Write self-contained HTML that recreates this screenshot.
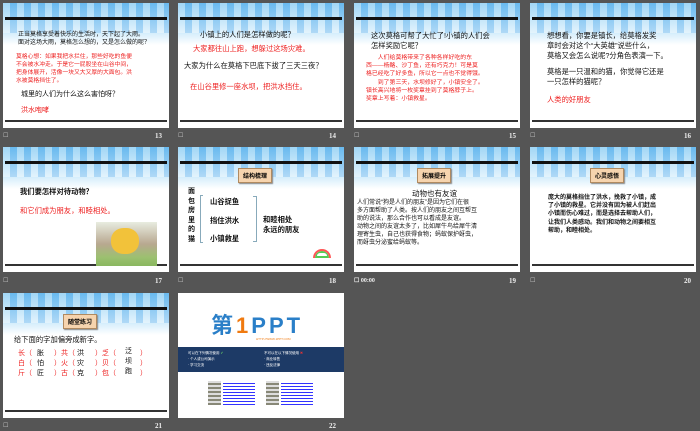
<!DOCTYPE html>
<html><head><meta charset="utf-8"><style>
*{margin:0;padding:0;box-sizing:border-box}
body{width:700px;height:431px;background:#555;position:relative;overflow:hidden;font-family:"Liberation Sans","Noto Sans CJK SC",sans-serif}
.s{position:absolute;width:166px;height:125px;background:#fff;overflow:hidden}
.hd{position:absolute;left:0;top:0;width:100%;height:42px;background:linear-gradient(180deg,#6fc0f0 0%,#9ad4f6 30%,#c4e6fa 60%,#fff 100%)}
.hd:before{content:"";position:absolute;left:0;right:0;top:0;height:30px;background:repeating-linear-gradient(90deg,rgba(255,255,255,.35) 0 7px,rgba(90,170,235,.3) 7px 14px)}
.bl{position:absolute;left:2px;right:2px;top:14px;height:3px;background:#111}
.bb{position:absolute;left:2px;right:2px;top:117px;height:2px;background:#333}
.t{position:absolute;font-size:7px;line-height:9px;white-space:nowrap;color:#111}
.r{color:#ee2222}
.n{position:absolute;color:#eee;font-size:7px;font-weight:bold;font-family:"Liberation Serif",serif}
.ic{position:absolute;color:#ccc;font-size:6px}
.tag{position:absolute;background:#f6d4ae;border:1px solid #b08a60;font-size:6px;font-weight:bold;padding:2px 4px;box-shadow:1px 1px 1px #888}
</style></head><body>

<!-- 13 -->
<div class="s" style="left:3px;top:3px"><div class="hd"></div><div class="bl"></div><div class="bb"></div>
<div class="t" style="left:15px;top:28px;font-size:6px;line-height:8px">正当莫格享受着快乐的生活时，天下起了大雨。<br>面对这场大雨，莫格怎么想的，又是怎么做的呢？</div>
<div class="t r" style="left:13px;top:50px;font-size:5.8px;line-height:8px">莫格心想：如果我把水拦住，那些好吃的鱼便<br>不会被水冲走。于是它一屁股坐在山谷中间，<br>把身体展开，活像一块又大又厚的大面包。洪<br>水被莫格挡住了。</div>
<div class="t" style="left:18px;top:87px;font-size:7px">城里的人们为什么这么害怕呀？</div>
<div class="t r" style="left:18px;top:103px">洪水咆哮</div>
</div>
<div class="ic" style="left:3px;top:132px">☐</div><div class="n" style="left:155px;top:132px">13</div>

<!-- 14 -->
<div class="s" style="left:178px;top:3px"><div class="hd"></div><div class="bl"></div><div class="bb"></div>
<div class="t" style="left:22px;top:27px;font-size:7.3px">小镇上的人们是怎样做的呢？</div>
<div class="t r" style="left:15px;top:41px;font-size:7.3px">大家都往山上跑，想躲过这场灾难。</div>
<div class="t" style="left:6px;top:58px;font-size:7.3px">大家为什么在莫格下巴底下拔了三天三夜？</div>
<div class="t r" style="left:12px;top:79px;font-size:7.3px">在山谷里修一座水坝，把洪水挡住。</div>
</div>
<div class="ic" style="left:178px;top:132px">☐</div><div class="n" style="left:329px;top:132px">14</div>

<!-- 15 -->
<div class="s" style="left:354px;top:3px"><div class="hd"></div><div class="bl"></div><div class="bb"></div>
<div class="t" style="left:17px;top:28px;line-height:10px;font-size:7.3px">这次莫格可帮了大忙了!小镇的人们会<br>怎样奖励它呢？</div>
<div class="t r" style="left:12px;top:51px;font-size:5.9px;line-height:8.2px">　　人们给莫格带来了各种各样好吃的东<br>西——杨酪、沙丁鱼，还有巧克力！可是莫<br>格已经吃了好多鱼，所以它一点也不觉得饿。<br>　　到了第三天，水坝修好了，小镇安全了。<br>镇长高兴地将一枚奖章挂到了莫格脖子上。<br>奖章上写着：小镇救星。</div>
</div>
<div class="ic" style="left:354px;top:132px">☐</div><div class="n" style="left:509px;top:132px">15</div>

<!-- 16 -->
<div class="s" style="left:530px;top:3px"><div class="hd"></div><div class="bl"></div><div class="bb"></div>
<div class="t" style="left:17px;top:28px;line-height:10px;font-size:7.3px">想想看，你要是镇长，给莫格发奖<br>章时会对这个“大英雄”说些什么，<br>莫格又会怎么说呢?分角色表演一下。</div>
<div class="t" style="left:17px;top:64px;line-height:10px;font-size:7.3px">莫格是一只温和的猫，你觉得它还是<br>一只怎样的猫呢？</div>
<div class="t r" style="left:17px;top:92px;font-size:7.3px">人类的好朋友</div>
</div>
<div class="ic" style="left:530px;top:132px">☐</div><div class="n" style="left:684px;top:132px">16</div>

<!-- 17 -->
<div class="s" style="left:3px;top:147px"><div class="hd"></div><div class="bl"></div><div class="bb"></div>
<div class="t" style="left:17px;top:40px;font-weight:bold;font-size:7.3px">我们要怎样对待动物？</div>
<div class="t r" style="left:17px;top:59px;font-size:7.3px">和它们成为朋友，和睦相处。</div>
<div style="position:absolute;left:93px;top:75px;width:61px;height:44px;background:linear-gradient(180deg,#e8ece0 0%,#b8a890 50%,#9cc070 80%,#8ab860 100%)"><div style="position:absolute;left:15px;top:6px;width:28px;height:26px;border-radius:45%;background:#f2c23a"></div></div>
</div>
<div class="ic" style="left:3px;top:277px">☐</div><div class="n" style="left:155px;top:277px">17</div>

<!-- 18 -->
<div class="s" style="left:178px;top:147px"><div class="hd"></div><div class="bl"></div><div class="bb"></div>
<div class="tag" style="left:60px;top:21px">结构梳理</div>
<div class="t" style="left:10px;top:40px;font-weight:bold;font-size:7px;line-height:9.5px">面<br>包<br>房<br>里<br>的<br>猫</div>
<div style="position:absolute;left:22px;top:48px;width:3px;height:48px;border:1px solid #8ab;border-right:none"></div>
<div class="t" style="left:32px;top:50px;font-weight:bold;font-size:7.3px">山谷捉鱼</div>
<div class="t" style="left:32px;top:69px;font-weight:bold;font-size:7.3px">挡住洪水</div>
<div class="t" style="left:32px;top:87px;font-weight:bold;font-size:7.3px">小镇救星</div>
<div style="position:absolute;left:75px;top:49px;width:4px;height:46px;border:1px solid #8ab;border-left:none"></div>
<div class="t" style="left:85px;top:68px;font-weight:bold;line-height:10px;font-size:7.3px">和睦相处<br>永远的朋友</div>
<div style="position:absolute;left:135px;top:102px;width:18px;height:9px;border-radius:9px 9px 0 0;border:2px solid #f55;border-bottom:none;box-shadow:inset 0 0 0 2px #5c5"></div>
</div>
<div class="ic" style="left:178px;top:277px">☐</div><div class="n" style="left:329px;top:277px">18</div>

<!-- 19 -->
<div class="s" style="left:354px;top:147px"><div class="hd"></div><div class="bl"></div><div class="bb"></div>
<div class="tag" style="left:63px;top:21px">拓展提升</div>
<div class="t" style="left:58px;top:42px;font-size:7.5px">动物也有友谊</div>
<div class="t" style="left:3px;top:52px;font-size:6px;line-height:8px">人们常说“狗是人们的朋友”是因为它们在很<br>多方面帮助了人类。按人们的朋友之间互帮互<br>助的说法，那么合作也可以看成是友谊。<br>动物之间的友谊太多了，比如犀牛鸟给犀牛清<br>理寄生虫，自己也获得食物；蚂蚁保护蚜虫，<br>而蚜虫分泌蜜给蚂蚁等。</div>
</div>
<div class="n" style="left:354px;top:277px;font-size:6px">☐ 00:00</div><div class="n" style="left:509px;top:277px">19</div>

<!-- 20 -->
<div class="s" style="left:530px;top:147px"><div class="hd"></div><div class="bl"></div><div class="bb"></div>
<div class="tag" style="left:60px;top:21px">心灵感悟</div>
<div class="t" style="left:18px;top:47px;font-weight:bold;font-size:6px;line-height:8.2px">庞大的莫格挡住了洪水，挽救了小镇，成<br>了小镇的救星。它并没有因为被人们赶出<br>小镇而伤心难过，而是选择去帮助人们，<br>让我们人类感动。我们和动物之间要相互<br>帮助，和睦相处。</div>
</div>
<div class="ic" style="left:530px;top:277px">☐</div><div class="n" style="left:684px;top:277px">20</div>

<!-- 21 -->
<div class="s" style="left:3px;top:293px"><div class="hd"></div><div class="bl"></div><div class="bb"></div>
<div class="tag" style="left:60px;top:21px">随堂练习</div>
<div class="t" style="left:11px;top:42px;font-size:7.3px">给下面的字加偏旁成新字。</div>
<div class="t r" style="left:15px;top:56px;line-height:10px">长（<br>白（<br>斤（</div>
<div class="t" style="left:34px;top:56px;line-height:10px">胀<br>怕<br>匠</div>
<div class="t r" style="left:51px;top:56px;line-height:10px">）共（<br>）火（<br>）古（</div>
<div class="t" style="left:74px;top:56px;line-height:10px">洪<br>灾<br>克</div>
<div class="t r" style="left:92px;top:56px;line-height:10px">）乏（<br>）贝（<br>）包（</div>
<div class="t" style="left:122px;top:54px;line-height:10px">泛<br>坝<br>跑</div>
<div class="t r" style="left:137px;top:56px;line-height:10px">）<br>）<br>）</div>
</div>
<div class="ic" style="left:3px;top:422px">☐</div><div class="n" style="left:155px;top:422px">21</div>

<!-- 22 -->
<div class="s" style="left:178px;top:293px">
<div class="t" style="left:33px;top:21px;font-size:22px;line-height:24px;color:#2a7fc8;font-weight:bold;letter-spacing:3px">第<span style="color:#f07a10">1</span>PPT</div>
<div class="t" style="left:78px;top:42px;font-size:3px;color:#f07a10">HTTP://WWW.1PPT.COM</div>
<div style="position:absolute;left:0;top:54px;width:166px;height:25px;background:#1d3a66"></div>
<div class="t" style="left:10px;top:57px;font-size:3.5px;color:#fff;line-height:6px">可以在下列情况使用 <span style="color:#6c6">✔</span><br>· 个人或公司演示<br>· 学习交流</div>
<div class="t" style="left:86px;top:57px;font-size:3.5px;color:#fff;line-height:6px">不可以在以下情况使用 <span style="color:#e33">✖</span><br>· 商业转售<br>· 违反法律</div>
<div style="position:absolute;left:30px;top:88px;width:13px;height:24px;background:repeating-linear-gradient(0deg,#887 0 2px,#ddd 2px 4px)"></div>
<div style="position:absolute;left:45px;top:88px;width:32px;height:24px;background:repeating-linear-gradient(0deg,#33f 0 1px,#fff 1px 3px)"></div>
<div style="position:absolute;left:88px;top:88px;width:13px;height:24px;background:repeating-linear-gradient(0deg,#887 0 2px,#ddd 2px 4px)"></div>
<div style="position:absolute;left:103px;top:88px;width:32px;height:24px;background:repeating-linear-gradient(0deg,#33f 0 1px,#fff 1px 3px)"></div>
</div>
<div class="n" style="left:329px;top:422px">22</div>
</body></html>
